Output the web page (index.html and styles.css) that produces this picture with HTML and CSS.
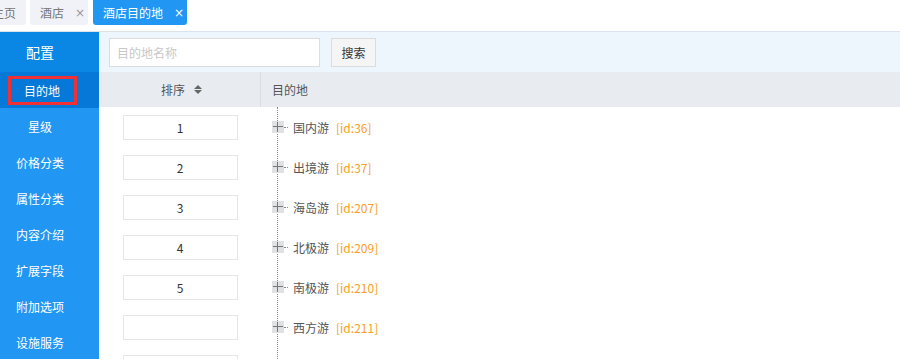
FILE: index.html
```html
<!DOCTYPE html>
<html lang="zh-CN">
<head>
<meta charset="utf-8">
<title>酒店目的地</title>
<link rel="stylesheet" href="styles.css">
</head>
<body>
<div class="tabs">
  <div class="tab first">主页</div>
  <div class="tab closable">酒店<span class="x">×</span></div>
  <div class="tab closable active">酒店目的地<span class="x">×</span></div>
</div>
<div class="main">
  <aside class="side">
    <div class="side-head">配置</div>
    <div class="item active"><span class="hl">目的地</span></div>
    <div class="item">星级</div>
    <div class="item">价格分类</div>
    <div class="item">属性分类</div>
    <div class="item">内容介绍</div>
    <div class="item">扩展字段</div>
    <div class="item">附加选项</div>
    <div class="item">设施服务</div>
  </aside>
  <section class="content">
    <div class="search">
      <div class="inp">目的地名称</div>
      <div class="btn">搜索</div>
    </div>
    <div class="thead">
      <div class="th c1">排序 <span class="sort"><i class="up"></i><i class="down"></i></span></div>
      <div class="th c2">目的地</div>
    </div>
    <div class="tbody">
      <div class="col1">
        <div class="cell"><div class="num">1</div></div>
        <div class="cell"><div class="num">2</div></div>
        <div class="cell"><div class="num">3</div></div>
        <div class="cell"><div class="num">4</div></div>
        <div class="cell"><div class="num">5</div></div>
        <div class="cell"><div class="num"></div></div>
        <div class="cell"><div class="num"></div></div>
      </div>
      <div class="col2">
        <div class="tree">
          <div class="node"><span class="plus"></span><span class="dash"></span><span class="name">国内游</span><span class="id">[id:36]</span></div>
          <div class="node"><span class="plus"></span><span class="dash"></span><span class="name">出境游</span><span class="id">[id:37]</span></div>
          <div class="node"><span class="plus"></span><span class="dash"></span><span class="name">海岛游</span><span class="id">[id:207]</span></div>
          <div class="node"><span class="plus"></span><span class="dash"></span><span class="name">北极游</span><span class="id">[id:209]</span></div>
          <div class="node"><span class="plus"></span><span class="dash"></span><span class="name">南极游</span><span class="id">[id:210]</span></div>
          <div class="node"><span class="plus"></span><span class="dash"></span><span class="name">西方游</span><span class="id">[id:211]</span></div>
          <div class="node"></div>
        </div>
      </div>
    </div>
  </section>
</div>
</body>
</html>
```
FILE: styles.css
```css
* { box-sizing: border-box; }
html, body { margin: 0; padding: 0; }
body {
  width: 900px;
  height: 359px;
  overflow: hidden;
  background: #fff;
  font-family: "Noto Sans CJK SC", "Noto Sans", sans-serif;
  font-size: 12px;
  color: #555;
}
.tabs {
  height: 32px;
  display: flex;
  gap: 4px;
  margin-left: -18px;
  background: #fff;
  border-bottom: 1px solid #dbe3ec;
}
.tab {
  height: 25px;
  padding: 0 10px;
  background: #f0f2f7;
  color: #777;
  border-radius: 0 0 3px 3px;
  display: flex;
  align-items: center;
  white-space: nowrap;
  flex: none;
}
.tab.closable { padding-right: 5px; }
.tab.active { margin-left: 1px; background: #2196f3; color: #fff; }
.tab .x {
  width: 8px;
  margin-left: 11px;
  font-family: "DejaVu Sans", sans-serif;
  font-size: 12px;
  color: #999;
  text-align: center;
}
.tab.active .x { color: #fff; }
.main {
  display: flex;
  height: 327px;
  overflow: hidden;
}
.side {
  width: 99px;
  flex: none;
  background: #2196f3;
  color: #fff;
  overflow: hidden;
}
.side-head {
  height: 40px;
  line-height: 40px;
  background: #0a87e5;
  text-align: center;
  padding-right: 19px;
  font-size: 14px;
}
.item {
  height: 36px;
  display: flex;
  align-items: center;
  justify-content: center;
  padding-right: 19px;
}
.item.active { background: #0678d8; }
.hl {
  border: 3px solid #f03035;
  width: 69px;
  height: 29px;
  display: flex;
  align-items: center;
  justify-content: center;
  margin-left: 4px;
}
.content { flex: 1; display: flex; flex-direction: column; min-width: 0; overflow: hidden; }
.search {
  height: 40px;
  flex: none;
  background: #eef6fd;
  display: flex;
  align-items: center;
  padding-left: 10px;
  gap: 11px;
}
.inp {
  width: 211px;
  height: 29px;
  background: #fff;
  border: 1px solid #dcdcdc;
  color: #c8c8c8;
  line-height: 27px;
  padding-left: 7px;
}
.btn {
  width: 45px;
  height: 29px;
  background: #f5f5f5;
  border: 1px solid #dcdcdc;
  color: #333;
  line-height: 27px;
  text-align: center;
}
.thead {
  height: 35px;
  flex: none;
  background: #e8ecf1;
  display: flex;
}
.th { display: flex; align-items: center; }
.th.c1 {
  width: 162px;
  justify-content: center;
  border-right: 1px solid #d8dde4;
  padding-left: 4px;
}
.th.c2 { padding-left: 11px; }
.sort {
  display: inline-flex;
  flex-direction: column;
  gap: 1px;
  margin-left: 9px;
}
.sort i {
  width: 0; height: 0;
  border-left: 4px solid transparent;
  border-right: 4px solid transparent;
}
.sort .up { border-bottom: 4px solid #666; }
.sort .down { border-top: 4px solid #666; }
.tbody { display: flex; flex: 1; min-height: 0; overflow: hidden; }
.col1 { width: 162px; flex: none; }
.cell {
  height: 40px;
  display: flex;
  align-items: center;
  justify-content: center;
}
.num {
  width: 115px;
  height: 25px;
  border: 1px solid #e6e6e6;
  text-align: center;
  line-height: 23px;
  color: #333;
}
.col2 { flex: 1; }
.tree {
  margin-left: 16px;
  border-left: 1px dotted #888;
  height: 100%;
}
.node {
  height: 40px;
  display: flex;
  align-items: center;
}
.plus {
  width: 12px;
  height: 12px;
  margin-left: -6px;
  background: #e0e1e3;
  position: relative;
  flex: none;
}
.plus::before, .plus::after {
  content: "";
  position: absolute;
  background: #777;
}
.plus::before { left: 1px; right: 1px; top: 5px; height: 1px; }
.plus::after { top: 1px; bottom: 1px; left: 5px; width: 1px; }
.dash {
  width: 4px;
  border-top: 1px dotted #888;
  margin-right: 5px;
}
.name { color: #555; }
.id { color: #f7a028; margin-left: 7px; }
```
